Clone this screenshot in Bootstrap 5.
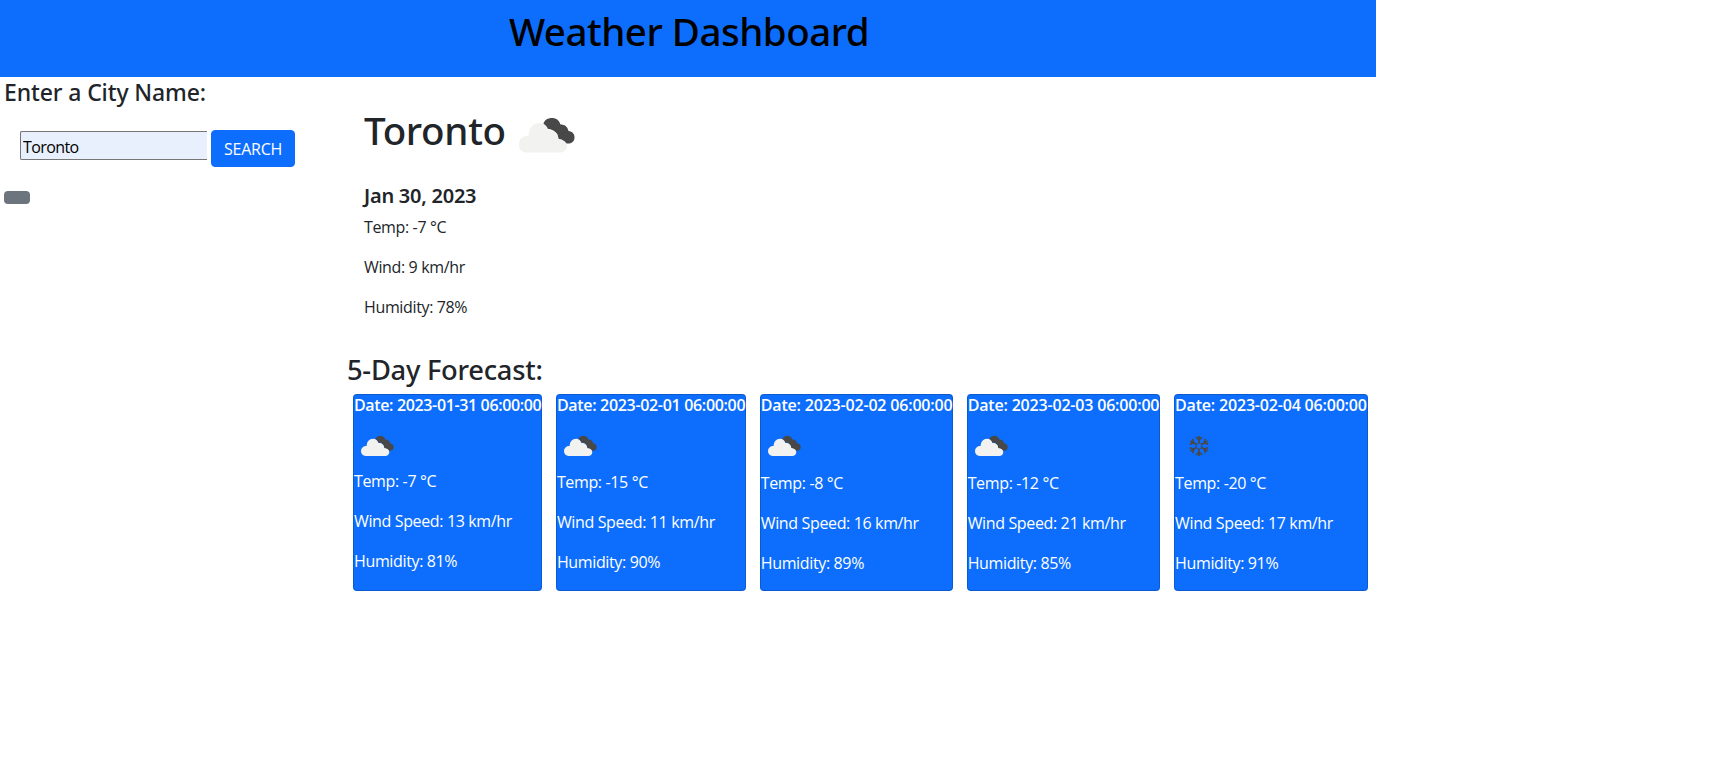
<!DOCTYPE html>
<html lang="en">
<head>
<meta charset="utf-8">
<title>Weather Dashboard</title>
<link href="https://cdn.jsdelivr.net/npm/bootstrap@5.3.0/dist/css/bootstrap.min.css" rel="stylesheet">
<style>
body{font-family:"Open Sans","Noto Sans",sans-serif;letter-spacing:-.36px}
h1,h2,h3{font-family:"Noto Sans","Open Sans",sans-serif}
.page{width:1376px}
.masthead{height:77px;padding-top:7px}
.masthead h1{color:#000;font-size:38.500px;line-height:48px;letter-spacing:-.5px;margin:0;padding-left:2px}
.sidebar{width:344px;padding:1px 0 0 4px}
.sidebar h2{font-size:23px;line-height:29px;letter-spacing:-.12px;margin-bottom:23px}
.search-form{padding-left:16px;gap:4px}
.city-input{width:187px;height:29px;margin-top:1px;padding:2px 2px 0;border:1px solid #767676;border-right:0;border-radius:2px 0 0 2px;background:#e8f0fe;color:#000;letter-spacing:-.6px}
.search-btn{width:84px;height:37px;padding:5px 0;border-radius:4px;letter-spacing:-.25px}
.history{width:26px;height:13px;border-radius:4px;margin-top:24px}
.today{padding:29px 0 0 20px}
.today h2{font-size:38.500px;line-height:48px;letter-spacing:-.3px;margin:0}
.today h3{font-size:20px;line-height:24px;font-weight:600;letter-spacing:-.25px;margin:30px 0 7px}
.today-icon{width:56px;height:35px;margin:12px 0 0 13px}
.forecast-title{font-size:27.300px;line-height:34px;letter-spacing:-.25px;margin:34px 0 7px 3px}
.days{display:grid;grid-template-columns:189px 190px 193px 193.500px 194px;column-gap:13.900px;padding-left:9px}
.day{height:197px;white-space:nowrap;border-radius:4px}
.day>*{flex-shrink:0}
.day h6{font-size:16px;line-height:20px;font-weight:600;letter-spacing:-.36px;margin:0}
.day-icon{width:50px;height:50px;margin:6px 0 -1px -1px}
.day:first-child .day-icon{margin-bottom:-2px}
.day:nth-child(2) h6{letter-spacing:-.32px}
.day:nth-child(n+3) h6{letter-spacing:-.19px}
.day:nth-child(n+3) .day-icon{margin-bottom:0}
.day p:last-child{margin-bottom:0}
</style>
</head>
<body>
<svg width="0" height="0" class="position-absolute">
<symbol id="cloud" viewBox="0 0 56 35"><path fill="#484849" d="M24.500 6C25 2 29 0 33 0c4 0 7 2 8.500 6.500 4 0 7 2 8 6.500 4 .5 6 3 6 6.500 0 4-3 6-6.500 6-4 0-6-1-6.500-4-3 0-4.500-2-4-5-3-4-6-5.500-10-5.500z"/><path fill="#f2f2f0" d="M8 34.500C3 34.500 0 31 0 26.500 0 21 4 17.500 9.500 17.500 10 10 14 5 20.500 5c4.500 0 8 3 9 7.500 5.500-.5 10 3 10 8.500 5 .5 8.500 3 8.500 7 0 4-3 6.500-7 6.500z"/></symbol>
<symbol id="cloud-day" viewBox="0 0 50 50"><use href="#cloud" x="8" y="14.500" width="33" height="21"/></symbol>
<symbol id="snow" viewBox="0 0 50 50"><g transform="translate(25 25)" fill="none" stroke="#484849" stroke-width="1.700"><path d="M0-3.200 2.800-1.600V1.600L0 3.200-2.800 1.600V-1.600z" stroke-width="1"/><g id="arm"><path d="M0-3V-10M-3-9 0-6 3-9"/></g><use href="#arm" transform="rotate(60)"/><use href="#arm" transform="rotate(120)"/><use href="#arm" transform="rotate(180)"/><use href="#arm" transform="rotate(240)"/><use href="#arm" transform="rotate(300)"/></g></symbol>
</svg>
<div class="page">
<header class="masthead bg-primary text-center"><h1>Weather Dashboard</h1></header>
<div class="d-flex">
<aside class="sidebar flex-shrink-0">
<h2>Enter a City Name:</h2>
<form class="search-form d-flex align-items-start"><input class="city-input" value="Toronto" aria-label="City"><button type="button" class="btn btn-primary search-btn">SEARCH</button></form>
<div class="history bg-secondary"></div>
</aside>
<main>
<section class="today">
<div class="d-flex align-items-start"><h2>Toronto</h2><svg class="today-icon"><use href="#cloud"/></svg></div>
<h3>Jan 30, 2023</h3>
<p>Temp: -7 °C</p>
<p>Wind: 9 km/hr</p>
<p>Humidity: 78%</p>
</section>
<h2 class="forecast-title">5-Day Forecast:</h2>
<div class="days">
<div class="card day text-bg-primary"><h6>Date: 2023-01-31 06:00:00</h6><svg class="day-icon"><use href="#cloud-day"/></svg><p>Temp: -7 °C</p><p>Wind Speed: 13 km/hr</p><p>Humidity: 81%</p></div>
<div class="card day text-bg-primary"><h6>Date: 2023-02-01 06:00:00</h6><svg class="day-icon"><use href="#cloud-day"/></svg><p>Temp: -15 °C</p><p>Wind Speed: 11 km/hr</p><p>Humidity: 90%</p></div>
<div class="card day text-bg-primary"><h6>Date: 2023-02-02 06:00:00</h6><svg class="day-icon"><use href="#cloud-day"/></svg><p>Temp: -8 °C</p><p>Wind Speed: 16 km/hr</p><p>Humidity: 89%</p></div>
<div class="card day text-bg-primary"><h6>Date: 2023-02-03 06:00:00</h6><svg class="day-icon"><use href="#cloud-day"/></svg><p>Temp: -12 °C</p><p>Wind Speed: 21 km/hr</p><p>Humidity: 85%</p></div>
<div class="card day text-bg-primary"><h6>Date: 2023-02-04 06:00:00</h6><svg class="day-icon"><use href="#snow"/></svg><p>Temp: -20 °C</p><p>Wind Speed: 17 km/hr</p><p>Humidity: 91%</p></div>
</div>
</main>
</div>
</div>
<script src="https://cdn.jsdelivr.net/npm/bootstrap@5.3.0/dist/js/bootstrap.bundle.min.js"></script>
</body>
</html>
